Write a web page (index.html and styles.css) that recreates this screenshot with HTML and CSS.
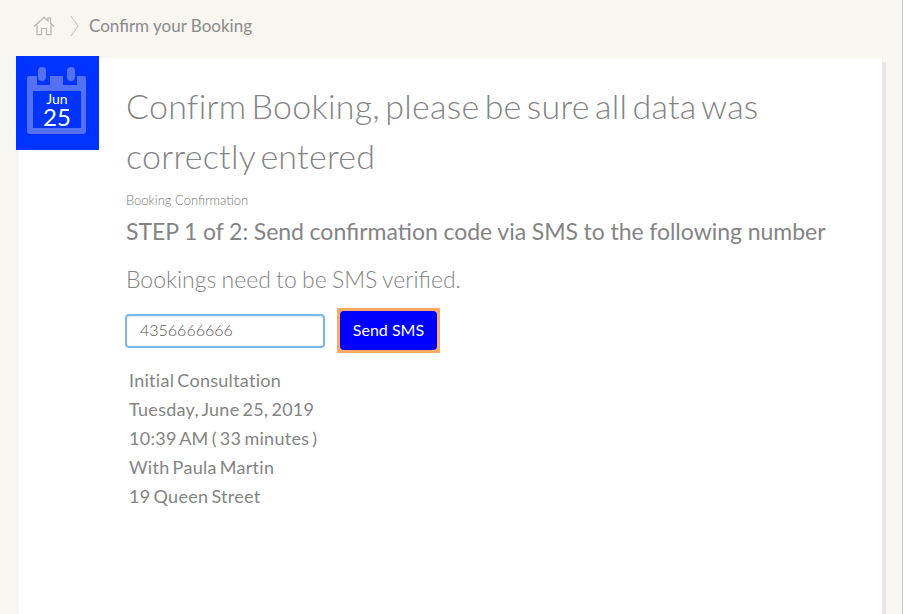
FILE: index.html
```html
<!DOCTYPE html>
<html lang="en">
<head>
    <meta charset="UTF-8">
    <title>Confirm your Booking</title>
    <link rel="stylesheet" href="styles.css">
</head>
<body>
    <div class="breadcrumb">
        <svg class="home-icon" width="22" height="20" viewBox="0 0 22 20" fill="none" stroke="#b4b4b0" stroke-width="1.2">
            <path d="M1 10.5 L11 1.2 L15 4.9 V2 H17.5 V7.2 L21 10.5"/>
            <path d="M4 8.5 V18.6 H8.5 V12.5 H13.5 V18.6 H18 V8.5"/>
        </svg>
        <svg class="crumb-sep" width="9" height="22" viewBox="0 0 9 22" fill="none" stroke="#c9c9c5" stroke-width="1.1">
            <path d="M1 1 L8 11 L1 21"/>
        </svg>
        <span class="crumb-text">Confirm your Booking</span>
    </div>

    <div class="card">
        <div class="date-badge">
            <svg class="calendar" width="59" height="67" viewBox="0 0 59 67" fill="#5470f5">
                <rect x="11" y="0" width="8" height="14" rx="4"/>
                <rect x="40" y="0" width="8" height="14" rx="4"/>
                <path d="M2 9 H10 V18 H23 V9 H36 V18 H50 V9 H57 Q59 9 59 11 V64 Q59 67 56 67 H3 Q0 67 0 64 V11 Q0 9 2 9 Z M6 24 V61 H54 V24 Z" fill-rule="evenodd"/>
            </svg>
            <div class="date-month">Jun</div>
            <div class="date-day">25</div>
        </div>

        <h1>Confirm Booking, please be sure all data was correctly entered</h1>
        <div class="small-label">Booking Confirmation</div>
        <h2>STEP 1 of 2: Send confirmation code via SMS to the following number</h2>
        <p class="note">Bookings need to be SMS verified.</p>

        <div class="sms-row">
            <input class="phone-input" type="text" value="4356666666">
            <span class="send-focus"><button class="send-btn">Send SMS</button></span>
        </div>

        <div class="details">
            <div>Initial Consultation</div>
            <div>Tuesday, June 25, 2019</div>
            <div>10:39 AM ( 33 minutes )</div>
            <div>With Paula Martin</div>
            <div>19 Queen Street</div>
        </div>
    </div>
</body>
</html>
```

FILE: styles.css
```css
html, body {
    height: 100%;
    margin: 0;
}

body {
    font-family: Lato, "Open Sans", sans-serif;
    background-color: #f7f6f1;
    color: #848484;
    overflow: hidden;
    border-right: 1px solid #c8c8c8;
    box-sizing: border-box;
}

.breadcrumb {
    display: flex;
    align-items: center;
    height: 58px;
    padding-left: 33px;
    box-sizing: border-box;
    padding-bottom: 7px;
}

.home-icon {
    margin-right: 15px;
}

.crumb-sep {
    margin-right: 10px;
}

.crumb-text {
    font-size: 17px;
    color: #8a8a8a;
}

.card {
    position: relative;
    margin-left: 19px;
    width: 863px;
    height: 556px;
    box-sizing: border-box;
    padding: 23px 0 0 107px;
    background-color: #fff;
    box-shadow: 4px 4px 0 #e8e7e3;
}

.date-badge {
    position: absolute;
    left: -3px;
    top: -2px;
    width: 83px;
    height: 94px;
    background-color: #0033ff;
    color: #fff;
    text-align: center;
}

.calendar {
    position: absolute;
    left: 11px;
    top: 11px;
}

.date-month {
    position: absolute;
    left: 0;
    right: 0;
    top: 37px;
    padding-right: 1px;
    font-size: 14px;
    line-height: 12px;
}

.date-day {
    position: absolute;
    left: 0;
    right: 0;
    top: 49px;
    padding-right: 1px;
    font-size: 24px;
    line-height: 24px;
}

h1 {
    margin: 0;
    width: 680px;
    font-size: 34px;
    font-weight: 300;
    line-height: 50px;
    letter-spacing: 0.25px;
    word-spacing: -4.25px;
    color: #848484;
}

.small-label {
    margin-top: 11px;
    font-size: 13px;
    font-weight: 300;
    line-height: 16px;
    color: #777;
}

h2 {
    margin: 9px 0 0;
    font-size: 23px;
    font-weight: 400;
    line-height: 28px;
    word-spacing: -0.3px;
}

.note {
    margin: 20px 0 0;
    font-size: 23px;
    font-weight: 300;
    line-height: 28px;
    word-spacing: -1px;
}

.sms-row {
    display: flex;
    align-items: center;
    margin-top: 15px;
    margin-left: -1px;
}

.phone-input {
    width: 200px;
    height: 34px;
    box-sizing: border-box;
    padding: 0 13px 2px;
    border: 2px solid #74b9f0;
    border-radius: 4px;
    font-family: inherit;
    font-size: 16px;
    font-weight: 300;
    color: #555;
    box-shadow: inset 0 1px 2px rgba(0, 0, 0, 0.1);
}

.send-focus {
    display: flex;
    margin-left: 12px;
    padding: 3px;
    background-color: #fba964;
}

.send-btn {
    width: 97px;
    height: 39px;
    box-sizing: border-box;
    border: 0;
    outline: none;
    padding: 0 0 2px;
    background-color: #0000ff;
    border-radius: 4px;
    color: #fff;
    font-family: inherit;
    font-size: 16px;
}

.details {
    margin-top: 13px;
    padding-left: 3px;
    font-size: 18px;
    line-height: 29px;
    letter-spacing: 0.28px;
    word-spacing: -1.8px;
}
```
